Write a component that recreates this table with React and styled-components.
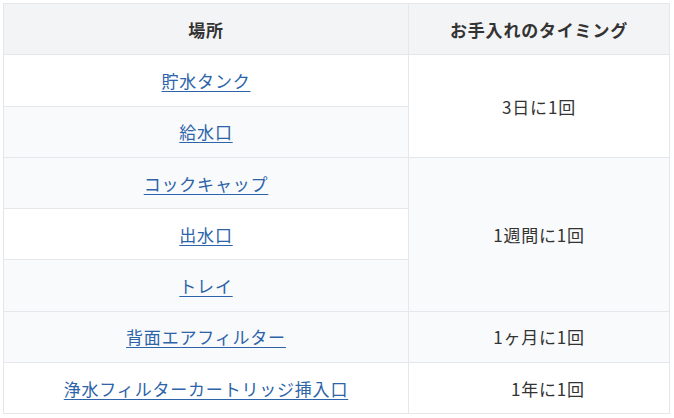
import React from "react";
import styled, { createGlobalStyle } from "styled-components";

const Global = createGlobalStyle`
  html, body { margin: 0; padding: 0; background: #ffffff; }
  body { font-family: "Noto Sans CJK JP", "Noto Sans", sans-serif; }
`;

const Wrap = styled.div`
  padding: 3px 4px 0 3px;
`;

const Table = styled.table`
  width: 667px;
  border-collapse: collapse;
  table-layout: fixed;
  font-size: 17px;
  letter-spacing: 0.8px;
  color: #333333;
`;

const Th = styled.th`
  height: 50.3px;
  padding: 0;
  background: #f3f4f6;
  border: 1px solid #e5e7eb;
  font-weight: 700;
  text-align: center;
  vertical-align: middle;
  width: ${(p) => p.$w || "auto"};
`;

const Row = styled.tr`
  background: ${(p) => (p.$shade ? "#f9fafb" : "#ffffff")};
`;

const Td = styled.td`
  height: 50.3px;
  padding: 0;
  border: 1px solid #e5e7eb;
  text-align: center;
  vertical-align: middle;
  font-weight: 400;
`;

const Link = styled.a`
  color: #2c63a9;
  text-decoration: underline;
  text-underline-offset: 3px;
  text-decoration-thickness: 1px;
  cursor: pointer;
`;

const rows = [
  { place: "貯水タンク", timing: "3日に1回", span: 2, shade: false },
  { place: "給水口", shade: true },
  { place: "コックキャップ", timing: "1週間に1回", span: 3, shade: true },
  { place: "出水口", shade: false },
  { place: "トレイ", shade: true },
  { place: "背面エアフィルター", timing: "1ヶ月に1回", span: 1, shade: true },
  { place: "浄水フィルターカートリッジ挿入口", timing: "\u30001年に1回", span: 1, shade: false },
];

export default function App() {
  return (
    <>
      <Global />
      <Wrap>
        <Table>
          <thead>
            <tr>
              <Th $w="404px">場所</Th>
              <Th>お手入れのタイミング</Th>
            </tr>
          </thead>
          <tbody>
            {rows.map((r) => (
              <Row key={r.place} $shade={r.shade}>
                <Td>
                  <Link>{r.place}</Link>
                </Td>
                {r.timing && <Td rowSpan={r.span}>{r.timing}</Td>}
              </Row>
            ))}
          </tbody>
        </Table>
      </Wrap>
    </>
  );
}
